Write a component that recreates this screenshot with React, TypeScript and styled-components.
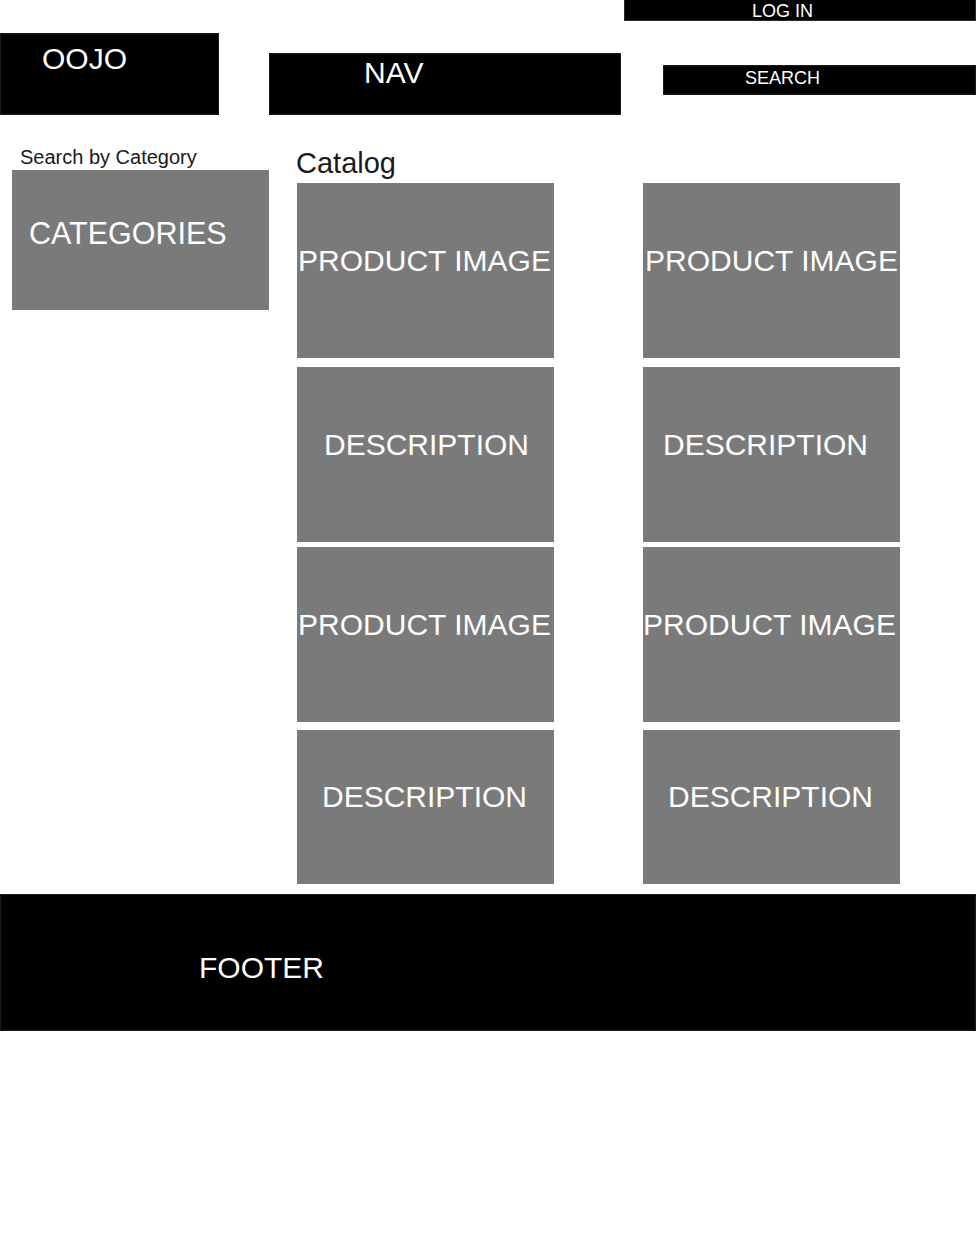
import React from 'react';
import styled, { createGlobalStyle } from 'styled-components';

const GlobalStyle = createGlobalStyle`
  html, body {
    margin: 0;
    padding: 0;
    background: #ffffff;
  }
  body {
    font-family: "Liberation Sans", Arial, sans-serif;
    color: #1a1a1a;
  }
  * {
    box-sizing: border-box;
  }
`;

// Header
const Header = styled.header`
  display: flex;
  align-items: flex-start;
  height: 115px;
`;

const Logo = styled.div`
  width: 219px;
  height: 82px;
  margin-top: 33px;
  padding: 8px 0 0 41px;
  background: #000;
  border: 1px solid #1c1c1c;
  color: #fff;
  font-size: 30px;
  line-height: 34px;
`;

const Nav = styled.nav`
  width: 352px;
  height: 62px;
  margin: 53px 0 0 50px;
  padding: 2px 0 0 94px;
  background: #000;
  border: 1px solid #1c1c1c;
  color: #fff;
  font-size: 30px;
  line-height: 34px;
`;

const Account = styled.div`
  flex: 1;
  display: flex;
  flex-direction: column;
  margin-left: 3px;
`;

const LoginBar = styled.div`
  height: 21px;
  padding: 2px 0 0 127px;
  background: #000;
  border: 1px solid #2a2a2a;
  border-top: none;
  color: #fff;
  font-size: 18px;
  line-height: 18px;
`;

const SearchBar = styled.div`
  height: 30px;
  margin: 44px 0 0 39px;
  padding: 2px 0 0 81px;
  background: #000;
  border: 1px solid #1c1c1c;
  color: #fff;
  font-size: 18px;
  line-height: 20px;
`;

// Main area
const Main = styled.main`
  display: flex;
  align-items: flex-start;
  padding: 31px 0 0 12px;
`;

const Sidebar = styled.aside`
  width: 257px;
  display: flex;
  flex-direction: column;
`;

const SidebarLabel = styled.div`
  padding-left: 8px;
  font-size: 20px;
  line-height: 23px;
  color: #1a1a1a;
`;

const CategoriesBox = styled.div`
  height: 140px;
  margin-top: 1px;
  padding: 46px 0 0 17px;
  background: #7a7a7a;
  color: #fff;
  font-size: 30.5px;
  line-height: 34px;
`;

const Catalog = styled.section`
  margin-left: 28px;
  display: flex;
  flex-direction: column;
`;

const CatalogTitle = styled.h2`
  margin: 1px 0 0 -1px;
  font-size: 29px;
  font-weight: normal;
  line-height: 33px;
  color: #1a1a1a;
`;

const ProductGrid = styled.div`
  display: flex;
  flex-direction: column;
  margin-top: 3px;
`;

const ProductRow = styled.div<{ $height: number; $spacing: number }>`
  display: grid;
  grid-template-columns: 257px 257px;
  column-gap: 89px;
  height: ${p => p.$height}px;
  margin-top: ${p => p.$spacing}px;
`;

const Tile = styled.div`
  display: flex;
  align-items: center;
  justify-content: center;
  padding-bottom: 20px;
  background: #7a7a7a;
  color: #fff;
  font-size: 30px;
  line-height: 34px;
  white-space: nowrap;
  overflow: hidden;
`;

const TileLabel = styled.span<{ $shift: number }>`
  transform: translateX(${p => p.$shift}px);
`;

// Footer
const Footer = styled.footer`
  height: 137px;
  margin-top: 10px;
  padding: 56px 0 0 198px;
  background: #000;
  border: 1px solid #1e1e1e;
  color: #fff;
  font-size: 30px;
  line-height: 34px;
`;

const rows = [
  { label: 'PRODUCT IMAGE', height: 175, spacing: 0, shifts: [-1, 0] },
  { label: 'DESCRIPTION', height: 175, spacing: 9, shifts: [1, -6] },
  { label: 'PRODUCT IMAGE', height: 175, spacing: 5, shifts: [-1, -2] },
  { label: 'DESCRIPTION', height: 154, spacing: 8, shifts: [-1, -1] },
];

export default function App() {
  return (
    <>
      <GlobalStyle />
      <Header>
        <Logo>OOJO</Logo>
        <Nav>NAV</Nav>
        <Account>
          <LoginBar>LOG IN</LoginBar>
          <SearchBar>SEARCH</SearchBar>
        </Account>
      </Header>

      <Main>
        <Sidebar>
          <SidebarLabel>Search by Category</SidebarLabel>
          <CategoriesBox>CATEGORIES</CategoriesBox>
        </Sidebar>

        <Catalog>
          <CatalogTitle>Catalog</CatalogTitle>
          <ProductGrid>
            {rows.map((row, i) => (
              <ProductRow key={i} $height={row.height} $spacing={row.spacing}>
                {row.shifts.map((shift, j) => (
                  <Tile key={j}>
                    <TileLabel $shift={shift}>{row.label}</TileLabel>
                  </Tile>
                ))}
              </ProductRow>
            ))}
          </ProductGrid>
        </Catalog>
      </Main>

      <Footer>FOOTER</Footer>
    </>
  );
}
